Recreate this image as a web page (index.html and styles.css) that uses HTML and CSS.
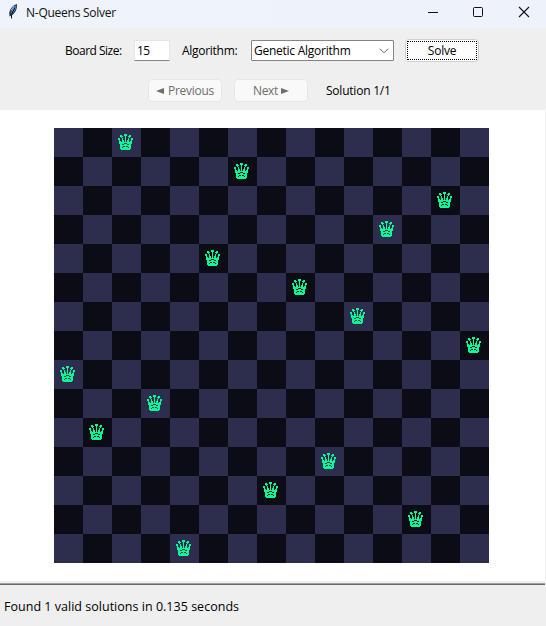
FILE: index.html
```
<!DOCTYPE html>
<html lang="en">
<head>
<meta charset="utf-8">
<title>N-Queens Solver</title>
<link rel="stylesheet" href="styles.css">
</head>
<body>
<header class="titlebar">
  <svg class="feather" width="12" height="17" viewBox="0 0 12 17">
    <path d="M9 1C5 2 2 5.500 1.200 10L1.500 13.500l2-1C7 10.500 9.500 6 9 1Z" fill="#24384f"/>
    <path d="M8.200 2C5.500 4 3.500 7 2.800 11.500C6 9.500 8.500 6 8.200 2Z" fill="#4e8fe0"/>
    <path d="M7 4.500L3.500 11.500v4" fill="none" stroke="#111" stroke-width="1"/>
    <path d="M6 3L3 7.500" stroke="#a9c6e8" stroke-width="1"/>
  </svg>
  <span class="title">N-Queens Solver</span>
  <svg class="controls" width="110" height="28" viewBox="0 0 110 28" fill="none" stroke="#111">
    <path d="M3 12.500h10"/>
    <rect x="48.500" y="7.500" width="9" height="9" rx="1"/>
    <path d="M94 7l10 10M104 7l-10 10" stroke-width="1.100"/>
  </svg>
</header>
<section class="toolbar">
  <div class="row settings">
    <span class="label size-label">Board Size:</span>
    <div class="entry">15</div>
    <span class="label algo-label">Algorithm:</span>
    <div class="combo"><span class="combo-text">Genetic Algorithm</span>
      <svg width="10" height="6" viewBox="0 0 10 6" fill="none" stroke="#666"><path d="M.8.700L5 4.900L9.200.700"/></svg>
    </div>
    <div class="button solve"><span class="focus">Solve</span></div>
  </div>
  <div class="row nav">
    <div class="button disabled"><i class="arrow left"></i><span class="prev-text">Previous</span></div>
    <div class="button disabled next"><span class="next-text">Next</span><i class="arrow right"></i></div>
    <span class="label solution">Solution 1/1</span>
  </div>
</section>
<main class="canvas"><div class="board" id="board"></div></main>
<footer class="status"><span>Found 1 valid solutions in 0.135 seconds</span></footer>
<script src="board.js"></script>
</body>
</html>
```
FILE: styles.css
```
* { box-sizing: border-box; }
body {
  margin: 0;
  width: 546px;
  height: 626px;
  overflow: hidden;
  display: flex;
  flex-direction: column;
  background: #efefef;
  color: #000;
  font: 12px/16px "Open Sans", "Noto Sans", sans-serif;
  white-space: nowrap;
}
.titlebar {
  height: 28px;
  flex: none;
  display: flex;
  background: linear-gradient(90deg, #eef4f9, #eef3fb);
}
.feather { margin: 3px 0 0 8px; }
.title { margin: 5px 0 0 6px; letter-spacing: -0.25px; color: #111; }
.controls { margin-left: auto; margin-right: 11px; }
.toolbar { height: 82px; flex: none; display: flex; flex-direction: column; }
.row { display: flex; align-items: center; }
.settings { height: 23px; margin-top: 11px; padding-left: 65px; }
.label { letter-spacing: -0.28px; }
.size-label { width: 69px; letter-spacing: -0.5px; }
.entry {
  width: 36px;
  height: 21px;
  padding: 2px 2px;
  background: #fff;
  border: 1px solid #e6e6e6;
  border-bottom-color: #858585;
  border-radius: 1px;
  letter-spacing: -0.6px;
}
.algo-label { margin-left: 12px; width: 69px; }
.combo {
  width: 143px;
  height: 21px;
  padding: 0 4px 0 2px;
  display: flex;
  align-items: center;
  justify-content: space-between;
  border: 1px solid #858585;
  border-radius: 1px;
  background: #fff;
  letter-spacing: -0.25px;
}
.button {
  display: flex;
  align-items: center;
  justify-content: center;
  background: #fdfdfd;
  border: 1px solid #d0d0d0;
  border-radius: 4px;
}
.solve { width: 74px; height: 23px; margin-left: 11px; padding: 1px; }
.focus {
  width: 100%;
  height: 19px;
  line-height: 17px;
  text-align: center;
  border: 1px dotted #000;
  letter-spacing: -0.25px;
}
.nav { height: 23px; margin-top: 17px; padding-left: 148px; }
.disabled {
  width: 74px;
  height: 23px;
  color: #6d6d6d;
  background: #f9f9f9;
  border-color: #e7e7e7;
  letter-spacing: -0.3px;
}
.next { margin-left: 12px; }
.arrow { border: 3.5px solid transparent; }
.left { border-right: 8px solid #6d6d6d; border-left: 0; margin-right: 4px; }
.right { border-left: 8px solid #6d6d6d; border-right: 0; margin-left: 3px; }
.solution { margin-left: 18px; letter-spacing: -0.22px; }
.canvas {
  height: 471px;
  flex: none;
  margin-right: 1px;
  padding: 18px 0 0 54px;
  background: #fff;
}
.board {
  display: grid;
  width: 435px;
  grid-template-columns: repeat(15, 29px);
  grid-auto-rows: 29px;
}
.cell { background: #0c0c16; padding: 6px; }
.cell.light { background: #2d2d4d; }
.cell svg { display: block; fill: #00ff99; }
.status {
  flex: 1;
  margin: 2px 1px 0 0;
  border-top: 1px solid #a0a0a0;
  padding: 15px 0 0 4px;
  box-shadow: inset 0 1px #696969;
  font-size: 12.5px;
  letter-spacing: 0.02px;
}
```
FILE: board.js
```
const queens = [2, 6, 13, 11, 5, 8, 10, 14, 0, 3, 1, 9, 7, 12, 4];
const bitmap = [
  "......###......",
  "..##..###..##..",
  "..###..#..###..",
  "...#...#...#...",
  "##..#..#..#..##",
  "##..#..#..#..##",
  ".#..##.#.##..#.",
  ".##.##.#.##.##.",
  ".#############.",
  ".#####...#####.",
  "..##..###..##..",
  "..###########..",
  "..###..#..###..",
  "..##.#####.##..",
  "..###########..",
  "...#########..."
];
const path = bitmap.map((line, y) =>
  [...line].map((c, x) => c === "#" ? `M${x} ${y}h1v1h-1z` : "").join("")
).join("");
const queen = `<svg width="15" height="16" shape-rendering="crispEdges"><path d="${path}"/></svg>`;
const board = document.getElementById("board");
queens.forEach((column, r) => {
  for (let c = 0; c < queens.length; c++) {
    const cell = document.createElement("div");
    cell.className = (r + c) % 2 ? "cell" : "cell light";
    if (c === column) cell.innerHTML = queen;
    board.appendChild(cell);
  }
});
```
